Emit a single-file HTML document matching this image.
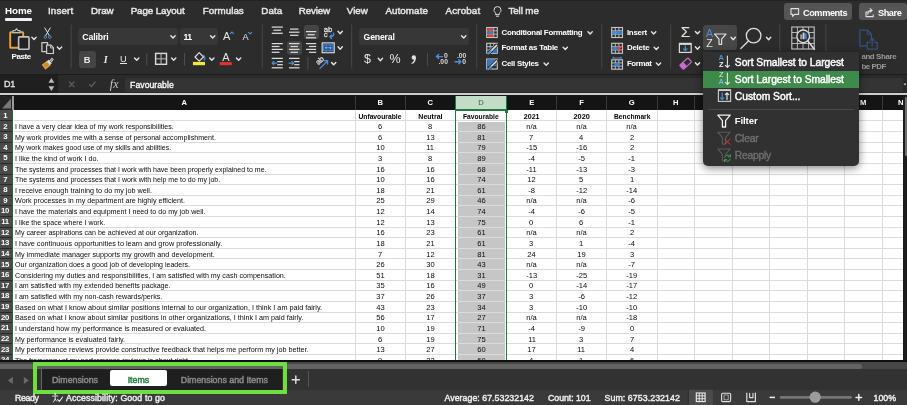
<!DOCTYPE html>
<html><head><meta charset="utf-8"><title>Excel</title>
<style>
html,body{margin:0;padding:0}
body{width:907px;height:405px;overflow:hidden;position:relative;background:#2c2c2c;font-family:"Liberation Sans",sans-serif}
#app{position:absolute;left:0;top:0;width:907px;height:405px;overflow:hidden;will-change:transform;transform:translateZ(0)}
.t{position:absolute;white-space:nowrap;display:block}
.r{position:absolute;box-sizing:content-box}
.clip{position:absolute;overflow:hidden}
svg{position:absolute;left:0;top:0}
</style></head><body><div id="app">
<div class="r" style="left:0.00px;top:0.00px;width:907.00px;height:74.00px;background:#2c2c2c;"></div>
<div class="r" style="left:0.00px;top:74.00px;width:907.00px;height:1.00px;background:#1c1c1c;"></div>
<div class="r" style="left:0.00px;top:0.00px;width:907.00px;height:1.00px;background:#232323;"></div>
<div class="r" style="left:0.00px;top:75.00px;width:907.00px;height:18.00px;background:#2a2a2a;"></div>
<div class="r" style="left:0.00px;top:75.00px;width:57.50px;height:18.00px;background:#1f1f1f;"></div>
<div class="r" style="left:124.50px;top:78.00px;width:778.00px;height:13.50px;background:#343434;border-radius:2px;"></div>
<div class="r" style="left:0.00px;top:93.00px;width:907.00px;height:3.00px;background:#161616;"></div>
<div class="r" style="left:0.00px;top:93.30px;width:907.00px;height:2.00px;background:#cdcdcd;"></div>
<span class="t" style="letter-spacing:-0.057px;left:5.00px;top:5.00px;font-size:9.80px;line-height:12px;color:#fff;font-weight:bold;">Home</span>
<span class="t" style="letter-spacing:0.148px;left:48.00px;top:5.00px;font-size:9.80px;line-height:12px;color:#e6e6e6;-webkit-text-stroke:0.45px #e6e6e6;">Insert</span>
<span class="t" style="letter-spacing:-0.092px;left:91.00px;top:5.00px;font-size:9.80px;line-height:12px;color:#e6e6e6;-webkit-text-stroke:0.45px #e6e6e6;">Draw</span>
<span class="t" style="letter-spacing:-0.103px;left:130.70px;top:5.00px;font-size:9.80px;line-height:12px;color:#e6e6e6;-webkit-text-stroke:0.45px #e6e6e6;">Page Layout</span>
<span class="t" style="letter-spacing:0.020px;left:202.80px;top:5.00px;font-size:9.80px;line-height:12px;color:#e6e6e6;-webkit-text-stroke:0.45px #e6e6e6;">Formulas</span>
<span class="t" style="letter-spacing:0.050px;left:261.30px;top:5.00px;font-size:9.80px;line-height:12px;color:#e6e6e6;-webkit-text-stroke:0.45px #e6e6e6;">Data</span>
<span class="t" style="letter-spacing:-0.189px;left:298.80px;top:5.00px;font-size:9.80px;line-height:12px;color:#e6e6e6;-webkit-text-stroke:0.45px #e6e6e6;">Review</span>
<span class="t" style="letter-spacing:0.009px;left:346.80px;top:5.00px;font-size:9.80px;line-height:12px;color:#e6e6e6;-webkit-text-stroke:0.45px #e6e6e6;">View</span>
<span class="t" style="letter-spacing:0.082px;left:385.40px;top:5.00px;font-size:9.80px;line-height:12px;color:#e6e6e6;-webkit-text-stroke:0.45px #e6e6e6;">Automate</span>
<span class="t" style="letter-spacing:0.132px;left:445.60px;top:5.00px;font-size:9.80px;line-height:12px;color:#e6e6e6;-webkit-text-stroke:0.45px #e6e6e6;">Acrobat</span>
<span class="t" style="letter-spacing:-0.092px;left:508.40px;top:5.00px;font-size:9.80px;line-height:12px;color:#e6e6e6;-webkit-text-stroke:0.45px #e6e6e6;">Tell me</span>
<div class="r" style="left:5.00px;top:18.40px;width:27.00px;height:2.20px;background:#f0f0f0;border-radius:1.1px;"></div>
<div class="r" style="left:784.20px;top:3.30px;width:68.00px;height:17.20px;background:#555555;border-radius:3px;"></div>
<div class="r" style="left:859.20px;top:3.30px;width:48.00px;height:17.20px;background:#555555;border-radius:3px;"></div>
<span class="t" style="letter-spacing:-0.393px;left:802.90px;top:6.50px;font-size:9.20px;line-height:12px;color:#fff;font-weight:bold;">Comments</span>
<span class="t" style="letter-spacing:-0.434px;left:878.00px;top:6.50px;font-size:9.20px;line-height:12px;color:#fff;font-weight:bold;">Share</span>
<div class="r" style="left:78.00px;top:28.20px;width:100.40px;height:17.30px;background:#373737;border-radius:3px;"></div>
<div class="r" style="left:180.00px;top:28.20px;width:38.00px;height:17.30px;background:#373737;border-radius:3px;"></div>
<div class="r" style="left:359.30px;top:28.40px;width:109.70px;height:16.60px;background:#373737;border-radius:3px;"></div>
<div class="r" style="left:78.60px;top:51.00px;width:17.10px;height:16.70px;background:#454545;border-radius:3px;"></div>
<div class="r" style="left:303.50px;top:25.00px;width:15.50px;height:14.30px;background:#454545;border-radius:3px;"></div>
<div class="r" style="left:286.50px;top:41.10px;width:15.50px;height:13.60px;background:#454545;border-radius:3px;"></div>
<div class="r" style="left:703.00px;top:25.20px;width:34.20px;height:24.80px;background:#474747;border-radius:3px;"></div>
<span class="t" style="letter-spacing:-0.125px;left:82.30px;top:30.60px;font-size:8.70px;line-height:12px;color:#fff;font-weight:bold;">Calibri</span>
<span class="t" style="letter-spacing:-0.649px;left:183.60px;top:30.60px;font-size:8.70px;line-height:12px;color:#fff;font-weight:bold;">11</span>
<span class="t" style="letter-spacing:-0.186px;left:363.60px;top:30.70px;font-size:8.70px;line-height:12px;color:#fff;font-weight:bold;">General</span>
<span class="t" style="letter-spacing:-0.463px;left:11.60px;top:50.90px;font-size:8.10px;line-height:12px;color:#fff;font-weight:bold;">Paste</span>
<span class="t" style="left:83.84px;top:53.60px;font-size:9.30px;line-height:12px;color:#e8e8e8;font-weight:bold;">B</span>
<span class="t" style="left:103.81px;top:53.60px;font-size:10.00px;line-height:12px;color:#e8e8e8;font-weight:bold;font-family:'Liberation Serif',serif;font-style:italic;">I</span>
<span class="t" style="left:119.94px;top:53.20px;font-size:9.30px;line-height:12px;color:#e8e8e8;">U</span>
<div class="r" style="left:119.80px;top:63.20px;width:7.00px;height:0.90px;background:#e8e8e8;"></div>
<span class="t" style="left:364.02px;top:53.20px;font-size:12.50px;line-height:12px;color:#e8e8e8;">$</span>
<span class="t" style="left:389.44px;top:53.20px;font-size:12.50px;line-height:12px;color:#e8e8e8;">%</span>
<span class="t" style="letter-spacing:-0.268px;left:501.50px;top:26.70px;font-size:7.90px;line-height:12px;color:#fff;font-weight:bold;">Conditional Formatting</span>
<span class="t" style="letter-spacing:-0.227px;left:501.50px;top:42.20px;font-size:7.90px;line-height:12px;color:#fff;font-weight:bold;">Format as Table</span>
<span class="t" style="letter-spacing:-0.242px;left:501.50px;top:57.90px;font-size:7.90px;line-height:12px;color:#fff;font-weight:bold;">Cell Styles</span>
<span class="t" style="letter-spacing:-0.236px;left:626.90px;top:26.70px;font-size:7.90px;line-height:12px;color:#fff;font-weight:bold;">Insert</span>
<span class="t" style="letter-spacing:-0.202px;left:626.90px;top:42.20px;font-size:7.90px;line-height:12px;color:#fff;font-weight:bold;">Delete</span>
<span class="t" style="letter-spacing:-0.346px;left:626.90px;top:57.90px;font-size:7.90px;line-height:12px;color:#fff;font-weight:bold;">Format</span>
<span class="t" style="letter-spacing:-0.377px;left:861.40px;top:51.00px;font-size:7.90px;line-height:12px;color:#9a9a9a;font-weight:bold;">and Share</span>
<span class="t" style="letter-spacing:-0.436px;left:861.40px;top:61.20px;font-size:7.90px;line-height:12px;color:#9a9a9a;font-weight:bold;">be PDF</span>
<span class="t" style="left:222.93px;top:30.40px;font-size:11.00px;line-height:12px;color:#e4e4e4;">A</span>
<span class="t" style="left:242.53px;top:31.20px;font-size:9.20px;line-height:12px;color:#e4e4e4;">A</span>
<span class="t" style="left:222.13px;top:50.60px;font-size:11.00px;line-height:12px;color:#e4e4e4;">A</span>
<span class="t" style="left:680.81px;top:26.30px;font-size:15.50px;line-height:12px;color:#e4e4e4;">Σ</span>
<span class="t" style="left:323.86px;top:24.30px;font-size:7.80px;line-height:12px;color:#dcdcdc;letter-spacing:-0.3px;-webkit-text-stroke:0.3px #dcdcdc;">ab</span>
<span class="t" style="left:323.85px;top:29.30px;font-size:7.80px;line-height:12px;color:#dcdcdc;-webkit-text-stroke:0.3px #dcdcdc;">c</span>
<span class="t" style="left:316.06px;top:55.40px;font-size:7.80px;line-height:12px;color:#dcdcdc;letter-spacing:-0.3px;-webkit-text-stroke:0.3px #dcdcdc;transform:rotate(-45deg);">ab</span>
<span class="t" style="left:706.06px;top:27.30px;font-size:10.60px;line-height:12px;color:#4a90d9;">A</span>
<span class="t" style="left:706.36px;top:37.40px;font-size:10.60px;line-height:12px;color:#e4e4e4;">Z</span>
<span class="t" style="left:443.91px;top:49.90px;font-size:6.80px;line-height:12px;color:#d8d8d8;font-weight:bold;">0</span>
<span class="t" style="letter-spacing:0.049px;left:438.40px;top:56.00px;font-size:6.80px;line-height:12px;color:#d8d8d8;font-weight:bold;">.00</span>
<span class="t" style="letter-spacing:-0.084px;left:457.00px;top:49.90px;font-size:6.80px;line-height:12px;color:#d8d8d8;font-weight:bold;">.00</span>
<span class="t" style="left:462.31px;top:56.00px;font-size:6.80px;line-height:12px;color:#d8d8d8;font-weight:bold;">0</span>
<span class="t" style="letter-spacing:-0.403px;left:4.10px;top:78.30px;font-size:9.00px;line-height:12px;color:#e6e6e6;-webkit-text-stroke:0.3px #e6e6e6;">D1</span>
<span class="t" style="letter-spacing:0.017px;left:130.10px;top:78.50px;font-size:8.70px;line-height:12px;color:#fff;-webkit-text-stroke:0.3px #fff;">Favourable</span>
<span class="t" style="left:109.83px;top:78.30px;font-size:12.00px;line-height:12px;color:#c8c8c8;font-family:'Liberation Serif',serif;font-style:italic;">fx</span>
<div class="r" style="left:0.00px;top:96.00px;width:907.00px;height:265.80px;background:#111;"></div>
<div class="r" style="left:13.40px;top:110.30px;width:889.90px;height:250.00px;background:#fff;"></div>
<div class="r" style="left:457.70px;top:121.82px;width:47.60px;height:238.48px;background:#c6c6c6;"></div>
<div class="r" style="left:13.50px;top:120.42px;width:889.50px;height:1.00px;background:#dcdcdc;"></div>
<div class="r" style="left:13.50px;top:131.04px;width:889.50px;height:1.00px;background:#dcdcdc;"></div>
<div class="r" style="left:13.50px;top:141.66px;width:889.50px;height:1.00px;background:#dcdcdc;"></div>
<div class="r" style="left:13.50px;top:152.28px;width:889.50px;height:1.00px;background:#dcdcdc;"></div>
<div class="r" style="left:13.50px;top:162.90px;width:889.50px;height:1.00px;background:#dcdcdc;"></div>
<div class="r" style="left:13.50px;top:173.52px;width:889.50px;height:1.00px;background:#dcdcdc;"></div>
<div class="r" style="left:13.50px;top:184.14px;width:889.50px;height:1.00px;background:#dcdcdc;"></div>
<div class="r" style="left:13.50px;top:194.76px;width:889.50px;height:1.00px;background:#dcdcdc;"></div>
<div class="r" style="left:13.50px;top:205.38px;width:889.50px;height:1.00px;background:#dcdcdc;"></div>
<div class="r" style="left:13.50px;top:216.00px;width:889.50px;height:1.00px;background:#dcdcdc;"></div>
<div class="r" style="left:13.50px;top:226.62px;width:889.50px;height:1.00px;background:#dcdcdc;"></div>
<div class="r" style="left:13.50px;top:237.24px;width:889.50px;height:1.00px;background:#dcdcdc;"></div>
<div class="r" style="left:13.50px;top:247.86px;width:889.50px;height:1.00px;background:#dcdcdc;"></div>
<div class="r" style="left:13.50px;top:258.48px;width:889.50px;height:1.00px;background:#dcdcdc;"></div>
<div class="r" style="left:13.50px;top:269.10px;width:889.50px;height:1.00px;background:#dcdcdc;"></div>
<div class="r" style="left:13.50px;top:279.72px;width:889.50px;height:1.00px;background:#dcdcdc;"></div>
<div class="r" style="left:13.50px;top:290.34px;width:889.50px;height:1.00px;background:#dcdcdc;"></div>
<div class="r" style="left:13.50px;top:300.96px;width:889.50px;height:1.00px;background:#dcdcdc;"></div>
<div class="r" style="left:13.50px;top:311.58px;width:889.50px;height:1.00px;background:#dcdcdc;"></div>
<div class="r" style="left:13.50px;top:322.20px;width:889.50px;height:1.00px;background:#dcdcdc;"></div>
<div class="r" style="left:13.50px;top:332.82px;width:889.50px;height:1.00px;background:#dcdcdc;"></div>
<div class="r" style="left:13.50px;top:343.44px;width:889.50px;height:1.00px;background:#dcdcdc;"></div>
<div class="r" style="left:13.50px;top:354.06px;width:889.50px;height:1.00px;background:#dcdcdc;"></div>
<div class="r" style="left:354.80px;top:110.30px;width:1.00px;height:250.00px;background:#dcdcdc;"></div>
<div class="r" style="left:404.80px;top:110.30px;width:1.00px;height:250.00px;background:#dcdcdc;"></div>
<div class="r" style="left:454.70px;top:110.30px;width:1.00px;height:250.00px;background:#dcdcdc;"></div>
<div class="r" style="left:506.30px;top:110.30px;width:1.00px;height:250.00px;background:#dcdcdc;"></div>
<div class="r" style="left:556.10px;top:110.30px;width:1.00px;height:250.00px;background:#dcdcdc;"></div>
<div class="r" style="left:606.00px;top:110.30px;width:1.00px;height:250.00px;background:#dcdcdc;"></div>
<div class="r" style="left:656.50px;top:110.30px;width:1.00px;height:250.00px;background:#dcdcdc;"></div>
<div class="r" style="left:694.00px;top:110.30px;width:1.00px;height:250.00px;background:#dcdcdc;"></div>
<div class="r" style="left:731.50px;top:110.30px;width:1.00px;height:250.00px;background:#dcdcdc;"></div>
<div class="r" style="left:769.00px;top:110.30px;width:1.00px;height:250.00px;background:#dcdcdc;"></div>
<div class="r" style="left:806.50px;top:110.30px;width:1.00px;height:250.00px;background:#dcdcdc;"></div>
<div class="r" style="left:844.00px;top:110.30px;width:1.00px;height:250.00px;background:#dcdcdc;"></div>
<div class="r" style="left:881.50px;top:110.30px;width:1.00px;height:250.00px;background:#dcdcdc;"></div>
<div class="r" style="left:13.50px;top:96.20px;width:889.80px;height:14.10px;background:#141414;"></div>
<div class="r" style="left:354.80px;top:96.00px;width:1.00px;height:14.00px;background:#3a3a3a;"></div>
<div class="r" style="left:404.80px;top:96.00px;width:1.00px;height:14.00px;background:#3a3a3a;"></div>
<div class="r" style="left:454.70px;top:96.00px;width:1.00px;height:14.00px;background:#3a3a3a;"></div>
<div class="r" style="left:506.30px;top:96.00px;width:1.00px;height:14.00px;background:#3a3a3a;"></div>
<div class="r" style="left:556.10px;top:96.00px;width:1.00px;height:14.00px;background:#3a3a3a;"></div>
<div class="r" style="left:606.00px;top:96.00px;width:1.00px;height:14.00px;background:#3a3a3a;"></div>
<div class="r" style="left:656.50px;top:96.00px;width:1.00px;height:14.00px;background:#3a3a3a;"></div>
<div class="r" style="left:694.00px;top:96.00px;width:1.00px;height:14.00px;background:#3a3a3a;"></div>
<div class="r" style="left:731.50px;top:96.00px;width:1.00px;height:14.00px;background:#3a3a3a;"></div>
<div class="r" style="left:769.00px;top:96.00px;width:1.00px;height:14.00px;background:#3a3a3a;"></div>
<div class="r" style="left:806.50px;top:96.00px;width:1.00px;height:14.00px;background:#3a3a3a;"></div>
<div class="r" style="left:844.00px;top:96.00px;width:1.00px;height:14.00px;background:#3a3a3a;"></div>
<div class="r" style="left:881.50px;top:96.00px;width:1.00px;height:14.00px;background:#3a3a3a;"></div>
<div class="r" style="left:455.20px;top:96.20px;width:51.60px;height:14.10px;background:#c3dcc8;"></div>
<span class="t" style="left:181.41px;top:97.40px;font-size:7.60px;line-height:12px;color:#fff;font-weight:bold;">A</span>
<span class="t" style="left:377.56px;top:97.40px;font-size:7.60px;line-height:12px;color:#fff;font-weight:bold;">B</span>
<span class="t" style="left:427.51px;top:97.40px;font-size:7.60px;line-height:12px;color:#fff;font-weight:bold;">C</span>
<span class="t" style="left:478.26px;top:97.40px;font-size:7.60px;line-height:12px;color:#2b6b3f;">D</span>
<span class="t" style="left:529.17px;top:97.40px;font-size:7.60px;line-height:12px;color:#fff;font-weight:bold;">E</span>
<span class="t" style="left:579.23px;top:97.40px;font-size:7.60px;line-height:12px;color:#fff;font-weight:bold;">F</span>
<span class="t" style="left:628.79px;top:97.40px;font-size:7.60px;line-height:12px;color:#fff;font-weight:bold;">G</span>
<span class="t" style="left:673.01px;top:97.40px;font-size:7.60px;line-height:12px;color:#fff;font-weight:bold;">H</span>
<span class="t" style="left:712.19px;top:97.40px;font-size:7.60px;line-height:12px;color:#fff;font-weight:bold;">I</span>
<span class="t" style="left:748.64px;top:97.40px;font-size:7.60px;line-height:12px;color:#fff;font-weight:bold;">J</span>
<span class="t" style="left:785.51px;top:97.40px;font-size:7.60px;line-height:12px;color:#fff;font-weight:bold;">K</span>
<span class="t" style="left:823.43px;top:97.40px;font-size:7.60px;line-height:12px;color:#fff;font-weight:bold;">L</span>
<span class="t" style="left:860.08px;top:97.40px;font-size:7.60px;line-height:12px;color:#fff;font-weight:bold;">M</span>
<div class="clip" style="left:880px;top:96px;width:23.4px;height:14px;">
<span class="t" style="left:17.96px;top:1.40px;font-size:7.60px;line-height:12px;color:#fff;font-weight:bold;">N</span>
</div>
<div class="r" style="left:0.00px;top:96.00px;width:12.30px;height:264.30px;background:#4a4a4a;"></div>
<div class="r" style="left:12.40px;top:96.00px;width:1.20px;height:14.30px;background:#9a9a9a;"></div>
<div class="r" style="left:0.00px;top:96.00px;width:12.30px;height:14.20px;background:#232323;"></div>
<span class="t" style="left:3.23px;top:109.91px;font-size:7.80px;line-height:12px;color:#fff;font-weight:bold;letter-spacing:-0.5px;">1</span>
<div class="r" style="left:0.00px;top:120.42px;width:12.20px;height:1.00px;background:#2a2a2a;"></div>
<span class="t" style="left:3.23px;top:120.53px;font-size:7.80px;line-height:12px;color:#fff;font-weight:bold;letter-spacing:-0.5px;">2</span>
<div class="r" style="left:0.00px;top:131.04px;width:12.20px;height:1.00px;background:#2a2a2a;"></div>
<span class="t" style="left:3.23px;top:131.15px;font-size:7.80px;line-height:12px;color:#fff;font-weight:bold;letter-spacing:-0.5px;">3</span>
<div class="r" style="left:0.00px;top:141.66px;width:12.20px;height:1.00px;background:#2a2a2a;"></div>
<span class="t" style="left:3.23px;top:141.77px;font-size:7.80px;line-height:12px;color:#fff;font-weight:bold;letter-spacing:-0.5px;">4</span>
<div class="r" style="left:0.00px;top:152.28px;width:12.20px;height:1.00px;background:#2a2a2a;"></div>
<span class="t" style="left:3.23px;top:152.39px;font-size:7.80px;line-height:12px;color:#fff;font-weight:bold;letter-spacing:-0.5px;">5</span>
<div class="r" style="left:0.00px;top:162.90px;width:12.20px;height:1.00px;background:#2a2a2a;"></div>
<span class="t" style="left:3.23px;top:163.01px;font-size:7.80px;line-height:12px;color:#fff;font-weight:bold;letter-spacing:-0.5px;">6</span>
<div class="r" style="left:0.00px;top:173.52px;width:12.20px;height:1.00px;background:#2a2a2a;"></div>
<span class="t" style="left:3.23px;top:173.63px;font-size:7.80px;line-height:12px;color:#fff;font-weight:bold;letter-spacing:-0.5px;">7</span>
<div class="r" style="left:0.00px;top:184.14px;width:12.20px;height:1.00px;background:#2a2a2a;"></div>
<span class="t" style="left:3.23px;top:184.25px;font-size:7.80px;line-height:12px;color:#fff;font-weight:bold;letter-spacing:-0.5px;">8</span>
<div class="r" style="left:0.00px;top:194.76px;width:12.20px;height:1.00px;background:#2a2a2a;"></div>
<span class="t" style="left:3.23px;top:194.87px;font-size:7.80px;line-height:12px;color:#fff;font-weight:bold;letter-spacing:-0.5px;">9</span>
<div class="r" style="left:0.00px;top:205.38px;width:12.20px;height:1.00px;background:#2a2a2a;"></div>
<span class="t" style="left:1.06px;top:205.49px;font-size:7.80px;line-height:12px;color:#fff;font-weight:bold;letter-spacing:-0.5px;">10</span>
<div class="r" style="left:0.00px;top:216.00px;width:12.20px;height:1.00px;background:#2a2a2a;"></div>
<span class="t" style="left:1.28px;top:216.11px;font-size:7.80px;line-height:12px;color:#fff;font-weight:bold;letter-spacing:-0.5px;">11</span>
<div class="r" style="left:0.00px;top:226.62px;width:12.20px;height:1.00px;background:#2a2a2a;"></div>
<span class="t" style="left:1.06px;top:226.73px;font-size:7.80px;line-height:12px;color:#fff;font-weight:bold;letter-spacing:-0.5px;">12</span>
<div class="r" style="left:0.00px;top:237.24px;width:12.20px;height:1.00px;background:#2a2a2a;"></div>
<span class="t" style="left:1.06px;top:237.35px;font-size:7.80px;line-height:12px;color:#fff;font-weight:bold;letter-spacing:-0.5px;">13</span>
<div class="r" style="left:0.00px;top:247.86px;width:12.20px;height:1.00px;background:#2a2a2a;"></div>
<span class="t" style="left:1.06px;top:247.97px;font-size:7.80px;line-height:12px;color:#fff;font-weight:bold;letter-spacing:-0.5px;">14</span>
<div class="r" style="left:0.00px;top:258.48px;width:12.20px;height:1.00px;background:#2a2a2a;"></div>
<span class="t" style="left:1.06px;top:258.59px;font-size:7.80px;line-height:12px;color:#fff;font-weight:bold;letter-spacing:-0.5px;">15</span>
<div class="r" style="left:0.00px;top:269.10px;width:12.20px;height:1.00px;background:#2a2a2a;"></div>
<span class="t" style="left:1.06px;top:269.21px;font-size:7.80px;line-height:12px;color:#fff;font-weight:bold;letter-spacing:-0.5px;">16</span>
<div class="r" style="left:0.00px;top:279.72px;width:12.20px;height:1.00px;background:#2a2a2a;"></div>
<span class="t" style="left:1.06px;top:279.83px;font-size:7.80px;line-height:12px;color:#fff;font-weight:bold;letter-spacing:-0.5px;">17</span>
<div class="r" style="left:0.00px;top:290.34px;width:12.20px;height:1.00px;background:#2a2a2a;"></div>
<span class="t" style="left:1.06px;top:290.45px;font-size:7.80px;line-height:12px;color:#fff;font-weight:bold;letter-spacing:-0.5px;">18</span>
<div class="r" style="left:0.00px;top:300.96px;width:12.20px;height:1.00px;background:#2a2a2a;"></div>
<span class="t" style="left:1.06px;top:301.07px;font-size:7.80px;line-height:12px;color:#fff;font-weight:bold;letter-spacing:-0.5px;">19</span>
<div class="r" style="left:0.00px;top:311.58px;width:12.20px;height:1.00px;background:#2a2a2a;"></div>
<span class="t" style="left:1.06px;top:311.69px;font-size:7.80px;line-height:12px;color:#fff;font-weight:bold;letter-spacing:-0.5px;">20</span>
<div class="r" style="left:0.00px;top:322.20px;width:12.20px;height:1.00px;background:#2a2a2a;"></div>
<span class="t" style="left:1.06px;top:322.31px;font-size:7.80px;line-height:12px;color:#fff;font-weight:bold;letter-spacing:-0.5px;">21</span>
<div class="r" style="left:0.00px;top:332.82px;width:12.20px;height:1.00px;background:#2a2a2a;"></div>
<span class="t" style="left:1.06px;top:332.93px;font-size:7.80px;line-height:12px;color:#fff;font-weight:bold;letter-spacing:-0.5px;">22</span>
<div class="r" style="left:0.00px;top:343.44px;width:12.20px;height:1.00px;background:#2a2a2a;"></div>
<span class="t" style="left:1.06px;top:343.55px;font-size:7.80px;line-height:12px;color:#fff;font-weight:bold;letter-spacing:-0.5px;">23</span>
<div class="r" style="left:0.00px;top:354.06px;width:12.20px;height:1.00px;background:#2a2a2a;"></div>
<div class="clip" style="left:0;top:0;width:13px;height:360.30px;">
<span class="t" style="left:1.06px;top:354.17px;font-size:7.80px;line-height:12px;color:#fff;font-weight:bold;letter-spacing:-0.5px;">24</span>
</div>
<div class="r" style="left:0.00px;top:364.68px;width:12.20px;height:1.00px;background:#2a2a2a;"></div>
<div class="r" style="left:12.20px;top:110.30px;width:1.20px;height:250.00px;background:#1e6b35;"></div>
<div class="clip" style="left:0;top:0px;width:907px;height:360.30px;">
<span class="t" style="left:355.38px;top:110.51px;font-size:7.80px;line-height:12px;color:#000;font-weight:bold;transform:scaleX(0.8627);">Unfavourable</span>
<span class="t" style="left:416.81px;top:110.51px;font-size:7.80px;line-height:12px;color:#000;font-weight:bold;transform:scaleX(0.9005);">Neutral</span>
<span class="t" style="left:460.19px;top:110.51px;font-size:7.80px;line-height:12px;color:#000;font-weight:bold;transform:scaleX(0.8579);">Favourable</span>
<span class="t" style="left:523.02px;top:110.51px;font-size:7.80px;line-height:12px;color:#000;font-weight:bold;transform:scaleX(0.9105);">2021</span>
<span class="t" style="left:572.87px;top:110.51px;font-size:7.80px;line-height:12px;color:#000;font-weight:bold;transform:scaleX(0.9393);">2020</span>
<span class="t" style="left:610.51px;top:110.51px;font-size:7.80px;line-height:12px;color:#000;font-weight:bold;transform:scaleX(0.8568);">Benchmark</span>
<span class="t" style="left:14.70px;top:121.13px;font-size:8.00px;line-height:12px;color:#0a0a0a;transform-origin:0 50%;transform:scaleX(0.8786);">I have a very clear idea of my work responsibilities.</span>
<span class="t" style="left:378.08px;top:121.13px;font-size:8.00px;line-height:12px;color:#0a0a0a;transform:scaleX(0.945);">6</span>
<span class="t" style="left:428.03px;top:121.13px;font-size:8.00px;line-height:12px;color:#0a0a0a;transform:scaleX(0.945);">8</span>
<span class="t" style="left:476.55px;top:121.13px;font-size:8.00px;line-height:12px;color:#0a0a0a;transform:scaleX(0.945);">86</span>
<span class="t" style="left:526.14px;top:121.13px;font-size:8.00px;line-height:12px;color:#0a0a0a;transform:scaleX(0.945);">n/a</span>
<span class="t" style="left:575.99px;top:121.13px;font-size:8.00px;line-height:12px;color:#0a0a0a;transform:scaleX(0.945);">n/a</span>
<span class="t" style="left:626.19px;top:121.13px;font-size:8.00px;line-height:12px;color:#0a0a0a;transform:scaleX(0.945);">n/a</span>
<span class="t" style="left:14.70px;top:131.75px;font-size:8.00px;line-height:12px;color:#0a0a0a;transform-origin:0 50%;transform:scaleX(0.8877);">My work provides me with a sense of personal accomplishment.</span>
<span class="t" style="left:378.08px;top:131.75px;font-size:8.00px;line-height:12px;color:#0a0a0a;transform:scaleX(0.945);">6</span>
<span class="t" style="left:425.80px;top:131.75px;font-size:8.00px;line-height:12px;color:#0a0a0a;transform:scaleX(0.945);">13</span>
<span class="t" style="left:476.55px;top:131.75px;font-size:8.00px;line-height:12px;color:#0a0a0a;transform:scaleX(0.945);">81</span>
<span class="t" style="left:529.48px;top:131.75px;font-size:8.00px;line-height:12px;color:#0a0a0a;transform:scaleX(0.945);">7</span>
<span class="t" style="left:579.33px;top:131.75px;font-size:8.00px;line-height:12px;color:#0a0a0a;transform:scaleX(0.945);">4</span>
<span class="t" style="left:629.53px;top:131.75px;font-size:8.00px;line-height:12px;color:#0a0a0a;transform:scaleX(0.945);">2</span>
<span class="t" style="left:14.70px;top:142.37px;font-size:8.00px;line-height:12px;color:#0a0a0a;transform-origin:0 50%;transform:scaleX(0.8739);">My work makes good use of my skills and abilities.</span>
<span class="t" style="left:375.85px;top:142.37px;font-size:8.00px;line-height:12px;color:#0a0a0a;transform:scaleX(0.945);">10</span>
<span class="t" style="left:426.10px;top:142.37px;font-size:8.00px;line-height:12px;color:#0a0a0a;transform:scaleX(0.945);">11</span>
<span class="t" style="left:476.55px;top:142.37px;font-size:8.00px;line-height:12px;color:#0a0a0a;transform:scaleX(0.945);">79</span>
<span class="t" style="left:525.92px;top:142.37px;font-size:8.00px;line-height:12px;color:#0a0a0a;transform:scaleX(0.945);">-15</span>
<span class="t" style="left:575.77px;top:142.37px;font-size:8.00px;line-height:12px;color:#0a0a0a;transform:scaleX(0.945);">-16</span>
<span class="t" style="left:629.53px;top:142.37px;font-size:8.00px;line-height:12px;color:#0a0a0a;transform:scaleX(0.945);">2</span>
<span class="t" style="left:14.70px;top:152.99px;font-size:8.00px;line-height:12px;color:#0a0a0a;transform-origin:0 50%;transform:scaleX(0.9028);">I like the kind of work I do.</span>
<span class="t" style="left:378.08px;top:152.99px;font-size:8.00px;line-height:12px;color:#0a0a0a;transform:scaleX(0.945);">3</span>
<span class="t" style="left:428.03px;top:152.99px;font-size:8.00px;line-height:12px;color:#0a0a0a;transform:scaleX(0.945);">8</span>
<span class="t" style="left:476.55px;top:152.99px;font-size:8.00px;line-height:12px;color:#0a0a0a;transform:scaleX(0.945);">89</span>
<span class="t" style="left:528.14px;top:152.99px;font-size:8.00px;line-height:12px;color:#0a0a0a;transform:scaleX(0.945);">-4</span>
<span class="t" style="left:577.99px;top:152.99px;font-size:8.00px;line-height:12px;color:#0a0a0a;transform:scaleX(0.945);">-5</span>
<span class="t" style="left:628.19px;top:152.99px;font-size:8.00px;line-height:12px;color:#0a0a0a;transform:scaleX(0.945);">-1</span>
<span class="t" style="left:14.70px;top:163.61px;font-size:8.00px;line-height:12px;color:#0a0a0a;transform-origin:0 50%;transform:scaleX(0.8769);">The systems and processes that I work with have been properly explained to me.</span>
<span class="t" style="left:375.85px;top:163.61px;font-size:8.00px;line-height:12px;color:#0a0a0a;transform:scaleX(0.945);">16</span>
<span class="t" style="left:425.80px;top:163.61px;font-size:8.00px;line-height:12px;color:#0a0a0a;transform:scaleX(0.945);">16</span>
<span class="t" style="left:476.55px;top:163.61px;font-size:8.00px;line-height:12px;color:#0a0a0a;transform:scaleX(0.945);">68</span>
<span class="t" style="left:526.22px;top:163.61px;font-size:8.00px;line-height:12px;color:#0a0a0a;transform:scaleX(0.945);">-11</span>
<span class="t" style="left:575.77px;top:163.61px;font-size:8.00px;line-height:12px;color:#0a0a0a;transform:scaleX(0.945);">-13</span>
<span class="t" style="left:628.19px;top:163.61px;font-size:8.00px;line-height:12px;color:#0a0a0a;transform:scaleX(0.945);">-3</span>
<span class="t" style="left:14.70px;top:174.23px;font-size:8.00px;line-height:12px;color:#0a0a0a;transform-origin:0 50%;transform:scaleX(0.8774);">The systems and processes that I work with help me to do my job.</span>
<span class="t" style="left:375.85px;top:174.23px;font-size:8.00px;line-height:12px;color:#0a0a0a;transform:scaleX(0.945);">10</span>
<span class="t" style="left:425.80px;top:174.23px;font-size:8.00px;line-height:12px;color:#0a0a0a;transform:scaleX(0.945);">16</span>
<span class="t" style="left:476.55px;top:174.23px;font-size:8.00px;line-height:12px;color:#0a0a0a;transform:scaleX(0.945);">74</span>
<span class="t" style="left:527.25px;top:174.23px;font-size:8.00px;line-height:12px;color:#0a0a0a;transform:scaleX(0.945);">12</span>
<span class="t" style="left:579.33px;top:174.23px;font-size:8.00px;line-height:12px;color:#0a0a0a;transform:scaleX(0.945);">5</span>
<span class="t" style="left:629.53px;top:174.23px;font-size:8.00px;line-height:12px;color:#0a0a0a;transform:scaleX(0.945);">1</span>
<span class="t" style="left:14.70px;top:184.85px;font-size:8.00px;line-height:12px;color:#0a0a0a;transform-origin:0 50%;transform:scaleX(0.9028);">I receive enough training to do my job well.</span>
<span class="t" style="left:375.85px;top:184.85px;font-size:8.00px;line-height:12px;color:#0a0a0a;transform:scaleX(0.945);">18</span>
<span class="t" style="left:425.80px;top:184.85px;font-size:8.00px;line-height:12px;color:#0a0a0a;transform:scaleX(0.945);">21</span>
<span class="t" style="left:476.55px;top:184.85px;font-size:8.00px;line-height:12px;color:#0a0a0a;transform:scaleX(0.945);">61</span>
<span class="t" style="left:528.14px;top:184.85px;font-size:8.00px;line-height:12px;color:#0a0a0a;transform:scaleX(0.945);">-8</span>
<span class="t" style="left:575.77px;top:184.85px;font-size:8.00px;line-height:12px;color:#0a0a0a;transform:scaleX(0.945);">-12</span>
<span class="t" style="left:625.97px;top:184.85px;font-size:8.00px;line-height:12px;color:#0a0a0a;transform:scaleX(0.945);">-14</span>
<span class="t" style="left:14.70px;top:195.47px;font-size:8.00px;line-height:12px;color:#0a0a0a;transform-origin:0 50%;transform:scaleX(0.8947);">Work processes in my department are highly efficient.</span>
<span class="t" style="left:375.85px;top:195.47px;font-size:8.00px;line-height:12px;color:#0a0a0a;transform:scaleX(0.945);">25</span>
<span class="t" style="left:425.80px;top:195.47px;font-size:8.00px;line-height:12px;color:#0a0a0a;transform:scaleX(0.945);">29</span>
<span class="t" style="left:476.55px;top:195.47px;font-size:8.00px;line-height:12px;color:#0a0a0a;transform:scaleX(0.945);">46</span>
<span class="t" style="left:526.14px;top:195.47px;font-size:8.00px;line-height:12px;color:#0a0a0a;transform:scaleX(0.945);">n/a</span>
<span class="t" style="left:575.99px;top:195.47px;font-size:8.00px;line-height:12px;color:#0a0a0a;transform:scaleX(0.945);">n/a</span>
<span class="t" style="left:628.19px;top:195.47px;font-size:8.00px;line-height:12px;color:#0a0a0a;transform:scaleX(0.945);">-6</span>
<span class="t" style="left:14.70px;top:206.09px;font-size:8.00px;line-height:12px;color:#0a0a0a;transform-origin:0 50%;transform:scaleX(0.8920);">I have the materials and equipment I need to do my job well.</span>
<span class="t" style="left:375.85px;top:206.09px;font-size:8.00px;line-height:12px;color:#0a0a0a;transform:scaleX(0.945);">12</span>
<span class="t" style="left:425.80px;top:206.09px;font-size:8.00px;line-height:12px;color:#0a0a0a;transform:scaleX(0.945);">14</span>
<span class="t" style="left:476.55px;top:206.09px;font-size:8.00px;line-height:12px;color:#0a0a0a;transform:scaleX(0.945);">74</span>
<span class="t" style="left:528.14px;top:206.09px;font-size:8.00px;line-height:12px;color:#0a0a0a;transform:scaleX(0.945);">-4</span>
<span class="t" style="left:577.99px;top:206.09px;font-size:8.00px;line-height:12px;color:#0a0a0a;transform:scaleX(0.945);">-6</span>
<span class="t" style="left:628.19px;top:206.09px;font-size:8.00px;line-height:12px;color:#0a0a0a;transform:scaleX(0.945);">-5</span>
<span class="t" style="left:14.70px;top:216.71px;font-size:8.00px;line-height:12px;color:#0a0a0a;transform-origin:0 50%;transform:scaleX(0.8734);">I like the space where I work.</span>
<span class="t" style="left:375.85px;top:216.71px;font-size:8.00px;line-height:12px;color:#0a0a0a;transform:scaleX(0.945);">12</span>
<span class="t" style="left:425.80px;top:216.71px;font-size:8.00px;line-height:12px;color:#0a0a0a;transform:scaleX(0.945);">13</span>
<span class="t" style="left:476.55px;top:216.71px;font-size:8.00px;line-height:12px;color:#0a0a0a;transform:scaleX(0.945);">75</span>
<span class="t" style="left:529.48px;top:216.71px;font-size:8.00px;line-height:12px;color:#0a0a0a;transform:scaleX(0.945);">0</span>
<span class="t" style="left:579.33px;top:216.71px;font-size:8.00px;line-height:12px;color:#0a0a0a;transform:scaleX(0.945);">6</span>
<span class="t" style="left:628.19px;top:216.71px;font-size:8.00px;line-height:12px;color:#0a0a0a;transform:scaleX(0.945);">-1</span>
<span class="t" style="left:14.70px;top:227.33px;font-size:8.00px;line-height:12px;color:#0a0a0a;transform-origin:0 50%;transform:scaleX(0.8836);">My career aspirations can be achieved at our organization.</span>
<span class="t" style="left:375.85px;top:227.33px;font-size:8.00px;line-height:12px;color:#0a0a0a;transform:scaleX(0.945);">16</span>
<span class="t" style="left:425.80px;top:227.33px;font-size:8.00px;line-height:12px;color:#0a0a0a;transform:scaleX(0.945);">23</span>
<span class="t" style="left:476.55px;top:227.33px;font-size:8.00px;line-height:12px;color:#0a0a0a;transform:scaleX(0.945);">61</span>
<span class="t" style="left:526.14px;top:227.33px;font-size:8.00px;line-height:12px;color:#0a0a0a;transform:scaleX(0.945);">n/a</span>
<span class="t" style="left:575.99px;top:227.33px;font-size:8.00px;line-height:12px;color:#0a0a0a;transform:scaleX(0.945);">n/a</span>
<span class="t" style="left:629.53px;top:227.33px;font-size:8.00px;line-height:12px;color:#0a0a0a;transform:scaleX(0.945);">2</span>
<span class="t" style="left:14.70px;top:237.95px;font-size:8.00px;line-height:12px;color:#0a0a0a;transform-origin:0 50%;transform:scaleX(0.9106);">I have continuous opportunities to learn and grow professionally.</span>
<span class="t" style="left:375.85px;top:237.95px;font-size:8.00px;line-height:12px;color:#0a0a0a;transform:scaleX(0.945);">18</span>
<span class="t" style="left:425.80px;top:237.95px;font-size:8.00px;line-height:12px;color:#0a0a0a;transform:scaleX(0.945);">21</span>
<span class="t" style="left:476.55px;top:237.95px;font-size:8.00px;line-height:12px;color:#0a0a0a;transform:scaleX(0.945);">61</span>
<span class="t" style="left:529.48px;top:237.95px;font-size:8.00px;line-height:12px;color:#0a0a0a;transform:scaleX(0.945);">3</span>
<span class="t" style="left:579.33px;top:237.95px;font-size:8.00px;line-height:12px;color:#0a0a0a;transform:scaleX(0.945);">1</span>
<span class="t" style="left:628.19px;top:237.95px;font-size:8.00px;line-height:12px;color:#0a0a0a;transform:scaleX(0.945);">-4</span>
<span class="t" style="left:14.70px;top:248.57px;font-size:8.00px;line-height:12px;color:#0a0a0a;transform-origin:0 50%;transform:scaleX(0.9018);">My immediate manager supports my growth and development.</span>
<span class="t" style="left:378.08px;top:248.57px;font-size:8.00px;line-height:12px;color:#0a0a0a;transform:scaleX(0.945);">7</span>
<span class="t" style="left:425.80px;top:248.57px;font-size:8.00px;line-height:12px;color:#0a0a0a;transform:scaleX(0.945);">12</span>
<span class="t" style="left:476.55px;top:248.57px;font-size:8.00px;line-height:12px;color:#0a0a0a;transform:scaleX(0.945);">81</span>
<span class="t" style="left:527.25px;top:248.57px;font-size:8.00px;line-height:12px;color:#0a0a0a;transform:scaleX(0.945);">24</span>
<span class="t" style="left:577.10px;top:248.57px;font-size:8.00px;line-height:12px;color:#0a0a0a;transform:scaleX(0.945);">19</span>
<span class="t" style="left:629.53px;top:248.57px;font-size:8.00px;line-height:12px;color:#0a0a0a;transform:scaleX(0.945);">3</span>
<span class="t" style="left:14.70px;top:259.19px;font-size:8.00px;line-height:12px;color:#0a0a0a;transform-origin:0 50%;transform:scaleX(0.8802);">Our organization does a good job of developing leaders.</span>
<span class="t" style="left:375.85px;top:259.19px;font-size:8.00px;line-height:12px;color:#0a0a0a;transform:scaleX(0.945);">26</span>
<span class="t" style="left:425.80px;top:259.19px;font-size:8.00px;line-height:12px;color:#0a0a0a;transform:scaleX(0.945);">30</span>
<span class="t" style="left:476.55px;top:259.19px;font-size:8.00px;line-height:12px;color:#0a0a0a;transform:scaleX(0.945);">43</span>
<span class="t" style="left:526.14px;top:259.19px;font-size:8.00px;line-height:12px;color:#0a0a0a;transform:scaleX(0.945);">n/a</span>
<span class="t" style="left:575.99px;top:259.19px;font-size:8.00px;line-height:12px;color:#0a0a0a;transform:scaleX(0.945);">n/a</span>
<span class="t" style="left:628.19px;top:259.19px;font-size:8.00px;line-height:12px;color:#0a0a0a;transform:scaleX(0.945);">-7</span>
<span class="t" style="left:14.70px;top:269.81px;font-size:8.00px;line-height:12px;color:#0a0a0a;transform-origin:0 50%;transform:scaleX(0.8917);">Considering my duties and responsibilities, I am satisfied with my cash compensation.</span>
<span class="t" style="left:375.85px;top:269.81px;font-size:8.00px;line-height:12px;color:#0a0a0a;transform:scaleX(0.945);">51</span>
<span class="t" style="left:425.80px;top:269.81px;font-size:8.00px;line-height:12px;color:#0a0a0a;transform:scaleX(0.945);">18</span>
<span class="t" style="left:476.55px;top:269.81px;font-size:8.00px;line-height:12px;color:#0a0a0a;transform:scaleX(0.945);">31</span>
<span class="t" style="left:525.92px;top:269.81px;font-size:8.00px;line-height:12px;color:#0a0a0a;transform:scaleX(0.945);">-13</span>
<span class="t" style="left:575.77px;top:269.81px;font-size:8.00px;line-height:12px;color:#0a0a0a;transform:scaleX(0.945);">-25</span>
<span class="t" style="left:625.97px;top:269.81px;font-size:8.00px;line-height:12px;color:#0a0a0a;transform:scaleX(0.945);">-19</span>
<span class="t" style="left:14.70px;top:280.43px;font-size:8.00px;line-height:12px;color:#0a0a0a;transform-origin:0 50%;transform:scaleX(0.8802);">I am satisfied with my extended benefits package.</span>
<span class="t" style="left:375.85px;top:280.43px;font-size:8.00px;line-height:12px;color:#0a0a0a;transform:scaleX(0.945);">35</span>
<span class="t" style="left:425.80px;top:280.43px;font-size:8.00px;line-height:12px;color:#0a0a0a;transform:scaleX(0.945);">16</span>
<span class="t" style="left:476.55px;top:280.43px;font-size:8.00px;line-height:12px;color:#0a0a0a;transform:scaleX(0.945);">49</span>
<span class="t" style="left:529.48px;top:280.43px;font-size:8.00px;line-height:12px;color:#0a0a0a;transform:scaleX(0.945);">0</span>
<span class="t" style="left:575.77px;top:280.43px;font-size:8.00px;line-height:12px;color:#0a0a0a;transform:scaleX(0.945);">-14</span>
<span class="t" style="left:625.97px;top:280.43px;font-size:8.00px;line-height:12px;color:#0a0a0a;transform:scaleX(0.945);">-17</span>
<span class="t" style="left:14.70px;top:291.05px;font-size:8.00px;line-height:12px;color:#0a0a0a;transform-origin:0 50%;transform:scaleX(0.8852);">I am satisfied with my non-cash rewards/perks.</span>
<span class="t" style="left:375.85px;top:291.05px;font-size:8.00px;line-height:12px;color:#0a0a0a;transform:scaleX(0.945);">37</span>
<span class="t" style="left:425.80px;top:291.05px;font-size:8.00px;line-height:12px;color:#0a0a0a;transform:scaleX(0.945);">26</span>
<span class="t" style="left:476.55px;top:291.05px;font-size:8.00px;line-height:12px;color:#0a0a0a;transform:scaleX(0.945);">37</span>
<span class="t" style="left:529.48px;top:291.05px;font-size:8.00px;line-height:12px;color:#0a0a0a;transform:scaleX(0.945);">3</span>
<span class="t" style="left:577.99px;top:291.05px;font-size:8.00px;line-height:12px;color:#0a0a0a;transform:scaleX(0.945);">-6</span>
<span class="t" style="left:625.97px;top:291.05px;font-size:8.00px;line-height:12px;color:#0a0a0a;transform:scaleX(0.945);">-12</span>
<span class="t" style="left:14.70px;top:301.67px;font-size:8.00px;line-height:12px;color:#0a0a0a;transform-origin:0 50%;transform:scaleX(0.9076);">Based on what I know about similar positions internal to our organization, I think I am paid fairly.</span>
<span class="t" style="left:375.85px;top:301.67px;font-size:8.00px;line-height:12px;color:#0a0a0a;transform:scaleX(0.945);">43</span>
<span class="t" style="left:425.80px;top:301.67px;font-size:8.00px;line-height:12px;color:#0a0a0a;transform:scaleX(0.945);">23</span>
<span class="t" style="left:476.55px;top:301.67px;font-size:8.00px;line-height:12px;color:#0a0a0a;transform:scaleX(0.945);">34</span>
<span class="t" style="left:529.48px;top:301.67px;font-size:8.00px;line-height:12px;color:#0a0a0a;transform:scaleX(0.945);">3</span>
<span class="t" style="left:575.77px;top:301.67px;font-size:8.00px;line-height:12px;color:#0a0a0a;transform:scaleX(0.945);">-10</span>
<span class="t" style="left:625.97px;top:301.67px;font-size:8.00px;line-height:12px;color:#0a0a0a;transform:scaleX(0.945);">-10</span>
<span class="t" style="left:14.70px;top:312.29px;font-size:8.00px;line-height:12px;color:#0a0a0a;transform-origin:0 50%;transform:scaleX(0.9012);">Based on what I know about similar positions in other organizations, I think I am paid fairly.</span>
<span class="t" style="left:375.85px;top:312.29px;font-size:8.00px;line-height:12px;color:#0a0a0a;transform:scaleX(0.945);">56</span>
<span class="t" style="left:425.80px;top:312.29px;font-size:8.00px;line-height:12px;color:#0a0a0a;transform:scaleX(0.945);">17</span>
<span class="t" style="left:476.55px;top:312.29px;font-size:8.00px;line-height:12px;color:#0a0a0a;transform:scaleX(0.945);">27</span>
<span class="t" style="left:526.14px;top:312.29px;font-size:8.00px;line-height:12px;color:#0a0a0a;transform:scaleX(0.945);">n/a</span>
<span class="t" style="left:575.99px;top:312.29px;font-size:8.00px;line-height:12px;color:#0a0a0a;transform:scaleX(0.945);">n/a</span>
<span class="t" style="left:625.97px;top:312.29px;font-size:8.00px;line-height:12px;color:#0a0a0a;transform:scaleX(0.945);">-18</span>
<span class="t" style="left:14.70px;top:322.91px;font-size:8.00px;line-height:12px;color:#0a0a0a;transform-origin:0 50%;transform:scaleX(0.8851);">I understand how my performance is measured or evaluated.</span>
<span class="t" style="left:375.85px;top:322.91px;font-size:8.00px;line-height:12px;color:#0a0a0a;transform:scaleX(0.945);">10</span>
<span class="t" style="left:425.80px;top:322.91px;font-size:8.00px;line-height:12px;color:#0a0a0a;transform:scaleX(0.945);">19</span>
<span class="t" style="left:476.55px;top:322.91px;font-size:8.00px;line-height:12px;color:#0a0a0a;transform:scaleX(0.945);">71</span>
<span class="t" style="left:528.14px;top:322.91px;font-size:8.00px;line-height:12px;color:#0a0a0a;transform:scaleX(0.945);">-4</span>
<span class="t" style="left:577.99px;top:322.91px;font-size:8.00px;line-height:12px;color:#0a0a0a;transform:scaleX(0.945);">-9</span>
<span class="t" style="left:629.53px;top:322.91px;font-size:8.00px;line-height:12px;color:#0a0a0a;transform:scaleX(0.945);">0</span>
<span class="t" style="left:14.70px;top:333.53px;font-size:8.00px;line-height:12px;color:#0a0a0a;transform-origin:0 50%;transform:scaleX(0.8910);">My performance is evaluated fairly.</span>
<span class="t" style="left:378.08px;top:333.53px;font-size:8.00px;line-height:12px;color:#0a0a0a;transform:scaleX(0.945);">6</span>
<span class="t" style="left:425.80px;top:333.53px;font-size:8.00px;line-height:12px;color:#0a0a0a;transform:scaleX(0.945);">19</span>
<span class="t" style="left:476.55px;top:333.53px;font-size:8.00px;line-height:12px;color:#0a0a0a;transform:scaleX(0.945);">75</span>
<span class="t" style="left:527.55px;top:333.53px;font-size:8.00px;line-height:12px;color:#0a0a0a;transform:scaleX(0.945);">11</span>
<span class="t" style="left:579.33px;top:333.53px;font-size:8.00px;line-height:12px;color:#0a0a0a;transform:scaleX(0.945);">3</span>
<span class="t" style="left:629.53px;top:333.53px;font-size:8.00px;line-height:12px;color:#0a0a0a;transform:scaleX(0.945);">7</span>
<span class="t" style="left:14.70px;top:344.15px;font-size:8.00px;line-height:12px;color:#0a0a0a;transform-origin:0 50%;transform:scaleX(0.9017);">My performance reviews provide constructive feedback that helps me perform my job better.</span>
<span class="t" style="left:375.85px;top:344.15px;font-size:8.00px;line-height:12px;color:#0a0a0a;transform:scaleX(0.945);">13</span>
<span class="t" style="left:425.80px;top:344.15px;font-size:8.00px;line-height:12px;color:#0a0a0a;transform:scaleX(0.945);">27</span>
<span class="t" style="left:476.55px;top:344.15px;font-size:8.00px;line-height:12px;color:#0a0a0a;transform:scaleX(0.945);">60</span>
<span class="t" style="left:527.25px;top:344.15px;font-size:8.00px;line-height:12px;color:#0a0a0a;transform:scaleX(0.945);">17</span>
<span class="t" style="left:577.40px;top:344.15px;font-size:8.00px;line-height:12px;color:#0a0a0a;transform:scaleX(0.945);">11</span>
<span class="t" style="left:629.53px;top:344.15px;font-size:8.00px;line-height:12px;color:#0a0a0a;transform:scaleX(0.945);">4</span>
<span class="t" style="left:14.70px;top:354.77px;font-size:8.00px;line-height:12px;color:#0a0a0a;transform-origin:0 50%;transform:scaleX(0.8765);">The frequency of my performance reviews is about right.</span>
<span class="t" style="left:378.08px;top:354.77px;font-size:8.00px;line-height:12px;color:#0a0a0a;transform:scaleX(0.945);">9</span>
<span class="t" style="left:425.80px;top:354.77px;font-size:8.00px;line-height:12px;color:#0a0a0a;transform:scaleX(0.945);">22</span>
<span class="t" style="left:476.55px;top:354.77px;font-size:8.00px;line-height:12px;color:#0a0a0a;transform:scaleX(0.945);">69</span>
<span class="t" style="left:529.48px;top:354.77px;font-size:8.00px;line-height:12px;color:#0a0a0a;transform:scaleX(0.945);">4</span>
<span class="t" style="left:579.33px;top:354.77px;font-size:8.00px;line-height:12px;color:#0a0a0a;transform:scaleX(0.945);">1</span>
<span class="t" style="left:629.53px;top:354.77px;font-size:8.00px;line-height:12px;color:#0a0a0a;transform:scaleX(0.945);">6</span>
</div>
<div class="r" style="left:454.60px;top:96.00px;width:1.30px;height:264.30px;background:#1e7a3c;"></div>
<div class="r" style="left:506.20px;top:96.00px;width:1.30px;height:264.30px;background:#1e7a3c;"></div>
<div class="r" style="left:454.60px;top:109.40px;width:52.50px;height:1.20px;background:#1e7a3c;"></div>
<div class="r" style="left:505.30px;top:110.20px;width:3.00px;height:3.00px;background:#1e7a3c;"></div>
<div class="r" style="left:0.00px;top:360.30px;width:907.00px;height:1.70px;background:#0e0e0e;"></div>
<div class="r" style="left:903.30px;top:96.00px;width:3.70px;height:264.30px;background:#1c1c1c;"></div>
<div class="r" style="left:905.10px;top:97.00px;width:2.00px;height:59.00px;background:#707070;border-radius:1px;"></div>
<div class="r" style="left:0.00px;top:362.00px;width:907.00px;height:7.00px;background:#474747;"></div>
<div class="r" style="left:0.00px;top:363.60px;width:862.00px;height:5.00px;background:#636363;border-radius:0 3px 3px 0;"></div>
<div class="r" style="left:0.00px;top:369.00px;width:907.00px;height:20.50px;background:#323232;"></div>
<div class="r" style="left:0.00px;top:389.50px;width:907.00px;height:15.50px;background:#3a3a3a;"></div>
<div class="r" style="left:41.00px;top:369.00px;width:241.00px;height:20.50px;background:#1f1f1f;"></div>
<div class="r" style="left:40.60px;top:369.00px;width:0.80px;height:20.50px;background:#666;"></div>
<div class="r" style="left:110.00px;top:370.40px;width:56.60px;height:15.80px;background:#fff;border-radius:2px;"></div>
<span class="t" style="letter-spacing:0.003px;left:52.00px;top:373.60px;font-size:8.80px;line-height:12px;color:#8a8a8a;-webkit-text-stroke:0.45px #8c8c8c;">Dimensions</span>
<span class="t" style="letter-spacing:-0.003px;left:127.65px;top:373.60px;font-size:8.80px;line-height:12px;color:#1e7a3c;-webkit-text-stroke:0.45px #1e7a3c;">Items</span>
<span class="t" style="letter-spacing:0.007px;left:180.80px;top:373.60px;font-size:8.80px;line-height:12px;color:#8a8a8a;-webkit-text-stroke:0.45px #8c8c8c;">Dimensions and Items</span>
<div class="r" style="left:308.40px;top:371.00px;width:0.80px;height:16.00px;background:#555;"></div>
<div class="r" style="left:33.4px;top:362.4px;width:245.9px;height:24px;border:4px solid #6ddf3e;"></div>
<span class="t" style="letter-spacing:-0.328px;left:14.90px;top:391.50px;font-size:8.80px;line-height:12px;color:#f0f0f0;-webkit-text-stroke:0.4px #f0f0f0;">Ready</span>
<span class="t" style="letter-spacing:0.106px;left:66.00px;top:391.50px;font-size:8.80px;line-height:12px;color:#f0f0f0;-webkit-text-stroke:0.4px #f0f0f0;">Accessibility: Good to go</span>
<span class="t" style="letter-spacing:0.030px;left:444.50px;top:391.50px;font-size:8.80px;line-height:12px;color:#f0f0f0;-webkit-text-stroke:0.4px #f0f0f0;">Average: 67.53232142</span>
<span class="t" style="letter-spacing:-0.056px;left:548.00px;top:391.50px;font-size:8.80px;line-height:12px;color:#f0f0f0;-webkit-text-stroke:0.4px #f0f0f0;">Count: 101</span>
<span class="t" style="letter-spacing:0.070px;left:604.50px;top:391.50px;font-size:8.80px;line-height:12px;color:#f0f0f0;-webkit-text-stroke:0.4px #f0f0f0;">Sum: 6753.232142</span>
<span class="t" style="letter-spacing:-0.002px;left:873.50px;top:391.50px;font-size:8.80px;line-height:12px;color:#f0f0f0;-webkit-text-stroke:0.4px #f0f0f0;">100%</span>
<div class="r" style="left:703.00px;top:51.50px;width:156.00px;height:114.80px;background:#313131;border-radius:0 0 5px 5px;box-shadow:0 2px 8px rgba(0,0,0,.5);"></div>
<div class="r" style="left:703.00px;top:70.60px;width:156.00px;height:17.00px;background:#3d8a4a;"></div>
<div class="r" style="left:708.00px;top:108.80px;width:146.00px;height:0.80px;background:#4a4a4a;"></div>
<span class="t" style="letter-spacing:-0.034px;left:734.80px;top:57.00px;font-size:10.30px;line-height:12px;color:#fff;-webkit-text-stroke:0.42px #fff;">Sort Smallest to Largest</span>
<span class="t" style="letter-spacing:-0.034px;left:734.80px;top:74.00px;font-size:10.30px;line-height:12px;color:#fff;-webkit-text-stroke:0.42px #fff;">Sort Largest to Smallest</span>
<span class="t" style="letter-spacing:-0.009px;left:734.80px;top:90.90px;font-size:10.30px;line-height:12px;color:#fff;-webkit-text-stroke:0.42px #fff;">Custom Sort...</span>
<span class="t" style="letter-spacing:-0.128px;left:734.80px;top:114.90px;font-size:9.60px;line-height:12px;color:#fff;font-weight:bold;">Filter</span>
<span class="t" style="letter-spacing:-0.183px;left:734.80px;top:133.30px;font-size:10.30px;line-height:12px;color:#6e6e6e;-webkit-text-stroke:0.42px #6e6e6e;">Clear</span>
<span class="t" style="letter-spacing:-0.227px;left:734.80px;top:150.40px;font-size:10.30px;line-height:12px;color:#6e6e6e;-webkit-text-stroke:0.42px #6e6e6e;">Reapply</span>
<span class="t" style="left:718.53px;top:51.90px;font-size:7.40px;line-height:12px;color:#4a90d9;font-weight:bold;">A</span>
<span class="t" style="left:718.94px;top:58.90px;font-size:7.40px;line-height:12px;color:#f0f0f0;font-weight:bold;">Z</span>
<span class="t" style="left:718.94px;top:69.30px;font-size:7.40px;line-height:12px;color:#dff0e2;">Z</span>
<span class="t" style="left:718.53px;top:76.10px;font-size:7.40px;line-height:12px;color:#7db4ea;font-weight:bold;">A</span>
<svg width="907" height="405" viewBox="0 0 907 405"><line x1="71.20" y1="24.50" x2="71.20" y2="68.50" stroke="#474747" stroke-width="1.00" stroke-linecap="butt"/><line x1="262.30" y1="24.50" x2="262.30" y2="68.50" stroke="#474747" stroke-width="1.00" stroke-linecap="butt"/><line x1="351.70" y1="24.50" x2="351.70" y2="68.50" stroke="#474747" stroke-width="1.00" stroke-linecap="butt"/><line x1="476.80" y1="24.50" x2="476.80" y2="68.50" stroke="#474747" stroke-width="1.00" stroke-linecap="butt"/><line x1="601.80" y1="24.50" x2="601.80" y2="68.50" stroke="#474747" stroke-width="1.00" stroke-linecap="butt"/><line x1="670.70" y1="24.50" x2="670.70" y2="68.50" stroke="#474747" stroke-width="1.00" stroke-linecap="butt"/><line x1="779.80" y1="24.50" x2="779.80" y2="51.00" stroke="#474747" stroke-width="1.00" stroke-linecap="butt"/><line x1="825.90" y1="24.50" x2="825.90" y2="51.00" stroke="#474747" stroke-width="1.00" stroke-linecap="butt"/><line x1="146.80" y1="52.90" x2="146.80" y2="65.50" stroke="#505050" stroke-width="1.00" stroke-linecap="butt"/><line x1="184.60" y1="52.90" x2="184.60" y2="65.50" stroke="#505050" stroke-width="1.00" stroke-linecap="butt"/><line x1="307.90" y1="57.20" x2="307.90" y2="69.50" stroke="#505050" stroke-width="1.00" stroke-linecap="butt"/><line x1="427.40" y1="52.80" x2="427.40" y2="65.70" stroke="#505050" stroke-width="1.00" stroke-linecap="butt"/><rect x="10.20" y="32.20" width="13.00" height="15.60" stroke="#e8a33d" fill="#202020" stroke-width="1.90" rx="0.60"/><path d="M12.9 32.6V30.6H15L16.5 28.6L18 30.6H20.1V32.6Z" stroke="#bdbdbd" fill="#2b2b2b" stroke-width="1.10" stroke-linejoin="round" stroke-linecap="round" /><rect x="18.60" y="36.90" width="10.40" height="12.40" stroke="#c4c4c4" fill="#222" stroke-width="1.60" rx="0.80"/><path d="M31.85 37.15L34.00 39.45L36.15 37.15" stroke="#e4e4e4" stroke-width="1.40" fill="none" stroke-linecap="round" stroke-linejoin="round"/><line x1="44.60" y1="27.60" x2="49.60" y2="36.00" stroke="#e4e4e4" stroke-width="1.00" stroke-linecap="butt"/><line x1="50.40" y1="27.60" x2="45.40" y2="36.00" stroke="#e4e4e4" stroke-width="1.00" stroke-linecap="butt"/><circle cx="45.30" cy="37.10" r="1.30" stroke="#4a90d9" fill="none" stroke-width="1.00"/><circle cx="49.80" cy="37.10" r="1.30" stroke="#4a90d9" fill="none" stroke-width="1.00"/><path d="M46.3 51.6H41.9V42.7H47.6V44.5" stroke="#cfcfcf" fill="none" stroke-width="1.20" stroke-linejoin="round" stroke-linecap="round" /><path d="M46.6 45.2H51L53.4 47.6V53.5H46.6Z" stroke="#cfcfcf" fill="#2c2c2c" stroke-width="1.20" stroke-linejoin="round" stroke-linecap="round" /><path d="M50.6 45.4V48H53.2" stroke="#cfcfcf" fill="none" stroke-width="0.90" stroke-linejoin="round" stroke-linecap="round" /><path d="M57.35 46.95L59.50 49.25L61.65 46.95" stroke="#e4e4e4" stroke-width="1.40" fill="none" stroke-linecap="round" stroke-linejoin="round"/><path d="M42.6 64.8L47.2 61.4L50 65L45.6 68.8Z" stroke="#e8a33d" fill="#c98a2f" stroke-width="1.10" stroke-linejoin="round" stroke-linecap="round" /><path d="M47.4 61.2L48.8 60L51.4 63.2L50 64.6Z" stroke="#e6e6e6" fill="#e6e6e6" stroke-width="0.60" stroke-linejoin="round" stroke-linecap="round" /><path d="M49.8 60.8L51.8 58.2L53.2 59.4L51.4 62" stroke="#cfcfcf" fill="#8a8a8a" stroke-width="1.00" stroke-linejoin="round" stroke-linecap="round" /><path d="M170.85 35.65L173.00 37.95L175.15 35.65" stroke="#e4e4e4" stroke-width="1.40" fill="none" stroke-linecap="round" stroke-linejoin="round"/><path d="M210.55 35.65L212.70 37.95L214.85 35.65" stroke="#e4e4e4" stroke-width="1.40" fill="none" stroke-linecap="round" stroke-linejoin="round"/><path d="M134.55 58.05L136.70 60.35L138.85 58.05" stroke="#e4e4e4" stroke-width="1.40" fill="none" stroke-linecap="round" stroke-linejoin="round"/><path d="M171.55 58.05L173.70 60.35L175.85 58.05" stroke="#e4e4e4" stroke-width="1.40" fill="none" stroke-linecap="round" stroke-linejoin="round"/><path d="M209.65 58.05L211.80 60.35L213.95 58.05" stroke="#e4e4e4" stroke-width="1.40" fill="none" stroke-linecap="round" stroke-linejoin="round"/><path d="M236.45 58.05L238.60 60.35L240.75 58.05" stroke="#e4e4e4" stroke-width="1.40" fill="none" stroke-linecap="round" stroke-linejoin="round"/><path d="M461.55 35.65L463.70 37.95L465.85 35.65" stroke="#e4e4e4" stroke-width="1.40" fill="none" stroke-linecap="round" stroke-linejoin="round"/><path d="M378.25 58.35L380.40 60.65L382.55 58.35" stroke="#e4e4e4" stroke-width="1.40" fill="none" stroke-linecap="round" stroke-linejoin="round"/><path d="M338.05 31.35L340.20 33.65L342.35 31.35" stroke="#e4e4e4" stroke-width="1.40" fill="none" stroke-linecap="round" stroke-linejoin="round"/><path d="M338.05 46.85L340.20 49.15L342.35 46.85" stroke="#e4e4e4" stroke-width="1.40" fill="none" stroke-linecap="round" stroke-linejoin="round"/><path d="M331.55 62.55L333.70 64.85L335.85 62.55" stroke="#e4e4e4" stroke-width="1.40" fill="none" stroke-linecap="round" stroke-linejoin="round"/><path d="M587.95 31.75L590.10 34.05L592.25 31.75" stroke="#e4e4e4" stroke-width="1.40" fill="none" stroke-linecap="round" stroke-linejoin="round"/><path d="M563.15 47.25L565.30 49.55L567.45 47.25" stroke="#e4e4e4" stroke-width="1.40" fill="none" stroke-linecap="round" stroke-linejoin="round"/><path d="M544.05 62.95L546.20 65.25L548.35 62.95" stroke="#e4e4e4" stroke-width="1.40" fill="none" stroke-linecap="round" stroke-linejoin="round"/><path d="M651.55 31.75L653.70 34.05L655.85 31.75" stroke="#e4e4e4" stroke-width="1.40" fill="none" stroke-linecap="round" stroke-linejoin="round"/><path d="M654.15 47.25L656.30 49.55L658.45 47.25" stroke="#e4e4e4" stroke-width="1.40" fill="none" stroke-linecap="round" stroke-linejoin="round"/><path d="M656.35 62.95L658.50 65.25L660.65 62.95" stroke="#e4e4e4" stroke-width="1.40" fill="none" stroke-linecap="round" stroke-linejoin="round"/><path d="M695.35 31.45L697.50 33.75L699.65 31.45" stroke="#e4e4e4" stroke-width="1.40" fill="none" stroke-linecap="round" stroke-linejoin="round"/><path d="M695.35 46.85L697.50 49.15L699.65 46.85" stroke="#e4e4e4" stroke-width="1.40" fill="none" stroke-linecap="round" stroke-linejoin="round"/><path d="M695.35 62.65L697.50 64.95L699.65 62.65" stroke="#e4e4e4" stroke-width="1.40" fill="none" stroke-linecap="round" stroke-linejoin="round"/><path d="M731.05 37.35L733.20 39.65L735.35 37.35" stroke="#e4e4e4" stroke-width="1.40" fill="none" stroke-linecap="round" stroke-linejoin="round"/><path d="M766.45 37.35L768.60 39.65L770.75 37.35" stroke="#e4e4e4" stroke-width="1.40" fill="none" stroke-linecap="round" stroke-linejoin="round"/><rect x="155.60" y="53.40" width="10.90" height="10.90" stroke="#dcdcdc" fill="none" stroke-width="1.40" rx="0.00"/><line x1="161.05" y1="53.40" x2="161.05" y2="64.30" stroke="#bdbdbd" stroke-width="1.00" stroke-linecap="butt"/><line x1="155.60" y1="58.85" x2="166.50" y2="58.85" stroke="#bdbdbd" stroke-width="1.00" stroke-linecap="butt"/><path d="M230.3 33.6L231.9 32L233.5 33.6" stroke="#4a90d9" fill="none" stroke-width="1.10" stroke-linejoin="round" stroke-linecap="round" /><path d="M248.5 32.3L250.1 33.9L251.7 32.3" stroke="#4a90d9" fill="none" stroke-width="1.10" stroke-linejoin="round" stroke-linecap="round" /><path d="M199.2 52.6L203.6 57L199.2 61.2L195 57Z" stroke="#e0e0e0" fill="none" stroke-width="1.15" stroke-linejoin="round" stroke-linecap="round" /><path d="M203.2 55.2C205.4 56.6 205.3 58.8 204.2 60.2" stroke="#4a90d9" fill="none" stroke-width="1.20" stroke-linejoin="round" stroke-linecap="round" /><rect x="192.90" y="61.90" width="12.10" height="3.30" stroke="none" fill="#f2e63a" stroke-width="0.00" rx="0.00"/><rect x="219.70" y="62.10" width="12.10" height="3.10" stroke="none" fill="#e3322b" stroke-width="0.00" rx="0.00"/><line x1="271.70" y1="27.10" x2="282.80" y2="27.10" stroke="#dcdcdc" stroke-width="1.25" stroke-linecap="butt"/><line x1="273.37" y1="30.20" x2="281.13" y2="30.20" stroke="#dcdcdc" stroke-width="1.25" stroke-linecap="butt"/><line x1="271.70" y1="33.30" x2="282.80" y2="33.30" stroke="#dcdcdc" stroke-width="1.25" stroke-linecap="butt"/><line x1="290.05" y1="29.10" x2="298.45" y2="29.10" stroke="#dcdcdc" stroke-width="1.25" stroke-linecap="butt"/><line x1="289.00" y1="32.20" x2="299.50" y2="32.20" stroke="#dcdcdc" stroke-width="1.25" stroke-linecap="butt"/><line x1="290.05" y1="35.30" x2="298.45" y2="35.30" stroke="#dcdcdc" stroke-width="1.25" stroke-linecap="butt"/><line x1="306.00" y1="31.60" x2="316.20" y2="31.60" stroke="#dcdcdc" stroke-width="1.25" stroke-linecap="butt"/><line x1="307.53" y1="34.70" x2="314.67" y2="34.70" stroke="#dcdcdc" stroke-width="1.25" stroke-linecap="butt"/><line x1="306.00" y1="37.80" x2="316.20" y2="37.80" stroke="#dcdcdc" stroke-width="1.25" stroke-linecap="butt"/><line x1="271.70" y1="43.60" x2="282.80" y2="43.60" stroke="#dcdcdc" stroke-width="1.25" stroke-linecap="butt"/><line x1="271.70" y1="46.50" x2="279.47" y2="46.50" stroke="#dcdcdc" stroke-width="1.25" stroke-linecap="butt"/><line x1="271.70" y1="49.40" x2="282.80" y2="49.40" stroke="#dcdcdc" stroke-width="1.25" stroke-linecap="butt"/><line x1="271.70" y1="52.30" x2="279.47" y2="52.30" stroke="#dcdcdc" stroke-width="1.25" stroke-linecap="butt"/><line x1="289.00" y1="43.60" x2="299.50" y2="43.60" stroke="#dcdcdc" stroke-width="1.25" stroke-linecap="butt"/><line x1="290.57" y1="46.50" x2="297.93" y2="46.50" stroke="#dcdcdc" stroke-width="1.25" stroke-linecap="butt"/><line x1="289.00" y1="49.40" x2="299.50" y2="49.40" stroke="#dcdcdc" stroke-width="1.25" stroke-linecap="butt"/><line x1="290.57" y1="52.30" x2="297.93" y2="52.30" stroke="#dcdcdc" stroke-width="1.25" stroke-linecap="butt"/><line x1="306.00" y1="43.60" x2="316.20" y2="43.60" stroke="#dcdcdc" stroke-width="1.25" stroke-linecap="butt"/><line x1="309.06" y1="46.50" x2="316.20" y2="46.50" stroke="#dcdcdc" stroke-width="1.25" stroke-linecap="butt"/><line x1="306.00" y1="49.40" x2="316.20" y2="49.40" stroke="#dcdcdc" stroke-width="1.25" stroke-linecap="butt"/><line x1="309.06" y1="52.30" x2="316.20" y2="52.30" stroke="#dcdcdc" stroke-width="1.25" stroke-linecap="butt"/><line x1="271.70" y1="58.40" x2="282.80" y2="58.40" stroke="#dcdcdc" stroke-width="1.25" stroke-linecap="butt"/><line x1="277.25" y1="61.60" x2="282.80" y2="61.60" stroke="#dcdcdc" stroke-width="1.25" stroke-linecap="butt"/><line x1="277.25" y1="64.70" x2="282.80" y2="64.70" stroke="#dcdcdc" stroke-width="1.25" stroke-linecap="butt"/><line x1="271.70" y1="67.80" x2="282.80" y2="67.80" stroke="#dcdcdc" stroke-width="1.25" stroke-linecap="butt"/><path d="M276.8 63.1H272.2M273.9 61.3L272.1 63.1L273.9 64.9" stroke="#4a90d9" fill="none" stroke-width="1.15" stroke-linejoin="round" stroke-linecap="round" /><line x1="289.00" y1="58.40" x2="299.50" y2="58.40" stroke="#dcdcdc" stroke-width="1.25" stroke-linecap="butt"/><line x1="294.25" y1="61.60" x2="299.50" y2="61.60" stroke="#dcdcdc" stroke-width="1.25" stroke-linecap="butt"/><line x1="294.25" y1="64.70" x2="299.50" y2="64.70" stroke="#dcdcdc" stroke-width="1.25" stroke-linecap="butt"/><line x1="289.00" y1="67.80" x2="299.50" y2="67.80" stroke="#dcdcdc" stroke-width="1.25" stroke-linecap="butt"/><path d="M289 63.1H293.6M291.9 61.3L293.7 63.1L291.9 64.9" stroke="#4a90d9" fill="none" stroke-width="1.15" stroke-linejoin="round" stroke-linecap="round" /><path d="M333.4 33.2C334.6 35.2 333 36.9 330 36.7M331.6 34.9L329.7 36.7L331.6 38.5" stroke="#4a90d9" fill="none" stroke-width="1.30" stroke-linejoin="round" stroke-linecap="round" /><rect x="322.20" y="42.90" width="12.00" height="9.80" stroke="#dcdcdc" fill="none" stroke-width="1.20" rx="0.00"/><rect x="323.40" y="44.90" width="9.60" height="5.80" stroke="#3f86d6" fill="#2a4f7d" stroke-width="1.20" rx="0.00"/><line x1="326.20" y1="43.00" x2="326.20" y2="44.60" stroke="#3f86d6" stroke-width="0.90" stroke-linecap="butt"/><line x1="330.20" y1="43.00" x2="330.20" y2="44.60" stroke="#3f86d6" stroke-width="0.90" stroke-linecap="butt"/><line x1="326.20" y1="51.00" x2="326.20" y2="52.60" stroke="#3f86d6" stroke-width="0.90" stroke-linecap="butt"/><line x1="330.20" y1="51.00" x2="330.20" y2="52.60" stroke="#3f86d6" stroke-width="0.90" stroke-linecap="butt"/><path d="M325.2 47.8H331.2M326.4 46.7L325.2 47.8L326.4 48.9M330 46.7L331.2 47.8L330 48.9" stroke="#8fc0f5" fill="none" stroke-width="0.80" stroke-linejoin="round" stroke-linecap="round" /><path d="M320 68.4L327.4 61M324.3 60.7H327.6V64" stroke="#4a90d9" fill="none" stroke-width="1.25" stroke-linejoin="round" stroke-linecap="round" /><path d="M411.6 57.4a2.2 2.2 0 1 1 4.4 0c0 3.4-1.6 5.6-4.2 6.6l-0.5-0.9c1.5-0.7 2.4-1.8 2.6-3.5a2.2 2.2 0 0 1-2.3-2.2Z" stroke="none" fill="#e0e0e0" stroke-width="0.00" stroke-linejoin="round" stroke-linecap="round" /><path d="M442.6 56.6H436.6M438.6 54.6L436.5 56.6L438.6 58.6" stroke="#4a90d9" fill="none" stroke-width="1.40" stroke-linejoin="round" stroke-linecap="round" /><path d="M455 61.8H460.8M458.8 59.8L460.9 61.8L458.8 63.8" stroke="#4a90d9" fill="none" stroke-width="1.40" stroke-linejoin="round" stroke-linecap="round" /><rect x="486.70" y="27.50" width="10.60" height="10.00" stroke="#c8c8c8" fill="none" stroke-width="1.10" rx="0.00"/><line x1="490.23" y1="27.50" x2="490.23" y2="37.50" stroke="#c8c8c8" stroke-width="0.90" stroke-linecap="butt"/><line x1="493.77" y1="27.50" x2="493.77" y2="37.50" stroke="#c8c8c8" stroke-width="0.90" stroke-linecap="butt"/><line x1="486.70" y1="30.83" x2="497.30" y2="30.83" stroke="#c8c8c8" stroke-width="0.90" stroke-linecap="butt"/><line x1="486.70" y1="34.17" x2="497.30" y2="34.17" stroke="#c8c8c8" stroke-width="0.90" stroke-linecap="butt"/><rect x="487.40" y="28.20" width="5.60" height="2.50" stroke="none" fill="#d9453d" stroke-width="0.00" rx="0.00"/><rect x="487.40" y="31.40" width="5.60" height="2.40" stroke="none" fill="#3f7fc9" stroke-width="0.00" rx="0.00"/><rect x="487.40" y="34.50" width="5.60" height="2.40" stroke="none" fill="#d9453d" stroke-width="0.00" rx="0.00"/><rect x="486.70" y="43.30" width="10.60" height="10.00" stroke="#c8c8c8" fill="none" stroke-width="1.10" rx="0.00"/><line x1="490.23" y1="43.30" x2="490.23" y2="53.30" stroke="#c8c8c8" stroke-width="0.90" stroke-linecap="butt"/><line x1="493.77" y1="43.30" x2="493.77" y2="53.30" stroke="#c8c8c8" stroke-width="0.90" stroke-linecap="butt"/><line x1="486.70" y1="46.63" x2="497.30" y2="46.63" stroke="#c8c8c8" stroke-width="0.90" stroke-linecap="butt"/><line x1="486.70" y1="49.97" x2="497.30" y2="49.97" stroke="#c8c8c8" stroke-width="0.90" stroke-linecap="butt"/><rect x="490.40" y="47.00" width="6.40" height="5.80" stroke="none" fill="#3a78c4" stroke-width="0.00" rx="0.00"/><path d="M489 53L496.8 45.2" stroke="#2c2c2c" fill="none" stroke-width="3.20" stroke-linejoin="round" stroke-linecap="round" /><path d="M489.4 52.6L496.6 45.4" stroke="#dcdcdc" fill="none" stroke-width="1.60" stroke-linejoin="round" stroke-linecap="round" /><path d="M488.2 53.6L490.8 51" stroke="#4a90d9" fill="none" stroke-width="1.80" stroke-linejoin="round" stroke-linecap="round" /><rect x="486.70" y="59.00" width="10.60" height="10.00" stroke="#c8c8c8" fill="none" stroke-width="1.10" rx="0.00"/><rect x="487.40" y="59.70" width="9.20" height="6.40" stroke="none" fill="#3a78c4" stroke-width="0.00" rx="0.00"/><path d="M489 68.7L496.8 60.9" stroke="#2c2c2c" fill="none" stroke-width="3.20" stroke-linejoin="round" stroke-linecap="round" /><path d="M489.4 68.3L496.6 61.1" stroke="#dcdcdc" fill="none" stroke-width="1.60" stroke-linejoin="round" stroke-linecap="round" /><path d="M488.2 69.3L490.8 66.7" stroke="#4a90d9" fill="none" stroke-width="1.80" stroke-linejoin="round" stroke-linecap="round" /><rect x="611.70" y="27.50" width="10.80" height="10.00" stroke="#c8c8c8" fill="none" stroke-width="1.10" rx="0.00"/><line x1="615.30" y1="27.50" x2="615.30" y2="37.50" stroke="#c8c8c8" stroke-width="0.90" stroke-linecap="butt"/><line x1="618.90" y1="27.50" x2="618.90" y2="37.50" stroke="#c8c8c8" stroke-width="0.90" stroke-linecap="butt"/><line x1="611.70" y1="30.83" x2="622.50" y2="30.83" stroke="#c8c8c8" stroke-width="0.90" stroke-linecap="butt"/><line x1="611.70" y1="34.17" x2="622.50" y2="34.17" stroke="#c8c8c8" stroke-width="0.90" stroke-linecap="butt"/><rect x="615.50" y="31.00" width="6.80" height="3.20" stroke="none" fill="#3f7fc9" stroke-width="0.00" rx="0.00"/><path d="M617.5 32.6H612.5M614.2 30.9L612.4 32.6L614.2 34.3" stroke="#4a90d9" fill="none" stroke-width="1.20" stroke-linejoin="round" stroke-linecap="round" /><rect x="611.70" y="43.30" width="10.80" height="10.00" stroke="#c8c8c8" fill="none" stroke-width="1.10" rx="0.00"/><line x1="615.30" y1="43.30" x2="615.30" y2="53.30" stroke="#c8c8c8" stroke-width="0.90" stroke-linecap="butt"/><line x1="618.90" y1="43.30" x2="618.90" y2="53.30" stroke="#c8c8c8" stroke-width="0.90" stroke-linecap="butt"/><line x1="611.70" y1="46.63" x2="622.50" y2="46.63" stroke="#c8c8c8" stroke-width="0.90" stroke-linecap="butt"/><line x1="611.70" y1="49.97" x2="622.50" y2="49.97" stroke="#c8c8c8" stroke-width="0.90" stroke-linecap="butt"/><rect x="612.60" y="46.70" width="5.00" height="3.20" stroke="none" fill="#3f7fc9" stroke-width="0.00" rx="0.00"/><path d="M617.6 46L621.8 50.6M621.8 46L617.6 50.6" stroke="#e0453d" fill="none" stroke-width="1.20" stroke-linejoin="round" stroke-linecap="round" /><rect x="611.70" y="59.80" width="10.80" height="9.40" stroke="#c8c8c8" fill="none" stroke-width="1.10" rx="0.00"/><line x1="615.30" y1="59.80" x2="615.30" y2="69.20" stroke="#c8c8c8" stroke-width="0.90" stroke-linecap="butt"/><line x1="618.90" y1="59.80" x2="618.90" y2="69.20" stroke="#c8c8c8" stroke-width="0.90" stroke-linecap="butt"/><line x1="611.70" y1="62.93" x2="622.50" y2="62.93" stroke="#c8c8c8" stroke-width="0.90" stroke-linecap="butt"/><line x1="611.70" y1="66.07" x2="622.50" y2="66.07" stroke="#c8c8c8" stroke-width="0.90" stroke-linecap="butt"/><rect x="614.20" y="62.90" width="5.80" height="3.30" stroke="none" fill="#3f7fc9" stroke-width="0.00" rx="0.00"/><path d="M613.2 58H621M613.2 57V59M621 57V59" stroke="#4a90d9" fill="none" stroke-width="1.00" stroke-linejoin="round" stroke-linecap="round" /><rect x="679.40" y="43.40" width="11.80" height="9.00" stroke="#dcdcdc" fill="none" stroke-width="1.20" rx="0.00"/><line x1="679.40" y1="44.00" x2="691.20" y2="44.00" stroke="#dcdcdc" stroke-width="1.80" stroke-linecap="butt"/><path d="M685.3 45.8V50.6M683.5 48.9L685.3 50.7L687.1 48.9" stroke="#4a90d9" fill="none" stroke-width="1.20" stroke-linejoin="round" stroke-linecap="round" /><g transform="rotate(-42 685.6 63.6)"><rect x="680" y="60.8" width="11.2" height="5.6" rx="1" stroke="#c76bd0" fill="none" stroke-width="1.2"/><rect x="680" y="60.8" width="5" height="5.6" rx="1" fill="#c76bd0"/></g><path d="M714.6 34H726L721.6 39.2V44.3H719V39.2Z" stroke="#dcdcdc" fill="none" stroke-width="1.20" stroke-linejoin="round" stroke-linecap="round" /><circle cx="753.60" cy="35.60" r="7.30" stroke="#dcdcdc" fill="none" stroke-width="1.30"/><line x1="748.40" y1="41.00" x2="740.80" y2="48.50" stroke="#dcdcdc" stroke-width="1.30" stroke-linecap="round"/><rect x="791.80" y="27.00" width="22.40" height="22.00" stroke="#c4c4c4" fill="none" stroke-width="1.10" rx="0.00"/><line x1="797.40" y1="27.00" x2="797.40" y2="49.00" stroke="#c4c4c4" stroke-width="0.90" stroke-linecap="butt"/><line x1="803.00" y1="27.00" x2="803.00" y2="49.00" stroke="#c4c4c4" stroke-width="0.90" stroke-linecap="butt"/><line x1="808.60" y1="27.00" x2="808.60" y2="49.00" stroke="#c4c4c4" stroke-width="0.90" stroke-linecap="butt"/><line x1="791.80" y1="32.50" x2="814.20" y2="32.50" stroke="#c4c4c4" stroke-width="0.90" stroke-linecap="butt"/><line x1="791.80" y1="38.00" x2="814.20" y2="38.00" stroke="#c4c4c4" stroke-width="0.90" stroke-linecap="butt"/><line x1="791.80" y1="43.50" x2="814.20" y2="43.50" stroke="#c4c4c4" stroke-width="0.90" stroke-linecap="butt"/><circle cx="803.20" cy="36.30" r="6.30" stroke="#dcdcdc" fill="#2c2c2c" stroke-width="1.30"/><line x1="807.80" y1="41.00" x2="814.40" y2="49.20" stroke="#dcdcdc" stroke-width="1.50" stroke-linecap="round"/><rect x="800.20" y="34.40" width="2.00" height="4.80" stroke="none" fill="#9a9a9a" stroke-width="0.00" rx="0.00"/><rect x="802.60" y="32.60" width="2.00" height="6.60" stroke="none" fill="#cfcfcf" stroke-width="0.00" rx="0.00"/><rect x="805.00" y="33.40" width="1.80" height="5.80" stroke="none" fill="#2f7fe0" stroke-width="0.00" rx="0.00"/><path d="M866 46H859.9V30.2H867.5L871.3 34V38.5" stroke="#34507c" fill="none" stroke-width="1.30" stroke-linejoin="round" stroke-linecap="round" /><path d="M867.3 30.4V34.2H871.1" stroke="#34507c" fill="none" stroke-width="1.10" stroke-linejoin="round" stroke-linecap="round" /><path d="M870 42.3H867.2V49.2H877.2V42.3H874.4" stroke="#34507c" fill="none" stroke-width="1.30" stroke-linejoin="round" stroke-linecap="round" /><path d="M872.2 46V38.6M870.3 40.4L872.2 38.5L874.1 40.4" stroke="#34507c" fill="none" stroke-width="1.30" stroke-linejoin="round" stroke-linecap="round" /><path d="M791 8.6H798.6V14.4H794.6L792.6 16.4V14.4H791Z" stroke="#e0e0e0" fill="none" stroke-width="1.10" stroke-linejoin="round" stroke-linecap="round" /><path d="M867.8 12H866V16.6H873.2V14.8" stroke="#e0e0e0" fill="none" stroke-width="1.10" stroke-linejoin="round" stroke-linecap="round" /><path d="M867.8 14.2C868 11.6 869.6 10.4 871.6 10.4M870.2 8.6L872.2 10.4L870.2 12.2" stroke="#e0e0e0" fill="none" stroke-width="1.10" stroke-linejoin="round" stroke-linecap="round" /><path d="M495.7 13.2C494.3 12.2 494 10.8 494 10.1A3.5 3.5 0 0 1 501 10.1C501 10.8 500.7 12.2 499.3 13.2V14.6H495.7Z" stroke="#dcdcdc" fill="none" stroke-width="1.00" stroke-linejoin="round" stroke-linecap="round" /><line x1="496.00" y1="16.20" x2="499.00" y2="16.20" stroke="#dcdcdc" stroke-width="1.00" stroke-linecap="butt"/><path d="M48.5 82.8L51.4 78.1L54.3 82.8Z" stroke="none" fill="#bdbdbd" stroke-width="0.00" stroke-linejoin="round" stroke-linecap="round" /><path d="M48.5 86.3L51.4 91L54.3 86.3Z" stroke="none" fill="#bdbdbd" stroke-width="0.00" stroke-linejoin="round" stroke-linecap="round" /><path d="M69.4 82L74 86.6M74 82L69.4 86.6" stroke="#5e5e5e" fill="none" stroke-width="1.30" stroke-linejoin="round" stroke-linecap="round" /><path d="M89.6 84.6L91.4 86.6L95 82" stroke="#5e5e5e" fill="none" stroke-width="1.30" stroke-linejoin="round" stroke-linecap="round" /><path d="M903.4 83.4L905 85.6L906.6 83.4Z" stroke="none" fill="#c8c8c8" stroke-width="0.00" stroke-linejoin="round" stroke-linecap="round" /><path d="M2 108.5H11V98.6Z" stroke="none" fill="#787878" stroke-width="0.00" stroke-linejoin="round" stroke-linecap="round" /><path d="M727.40 56.00V67.40M725.40 65.40L727.40 67.40L729.40 65.40" stroke="#e4e4e4" fill="none" stroke-width="1.10" stroke-linejoin="round" stroke-linecap="round" /><path d="M727.40 73.00V84.40M725.40 82.40L727.40 84.40L729.40 82.40" stroke="#e4e4e4" fill="none" stroke-width="1.10" stroke-linejoin="round" stroke-linecap="round" /><rect x="718.40" y="89.80" width="12.20" height="11.60" stroke="#d0d0d0" fill="none" stroke-width="1.10" rx="0.00"/><line x1="718.40" y1="90.20" x2="730.60" y2="90.20" stroke="#d0d0d0" stroke-width="1.60" stroke-linecap="butt"/><path d="M722.20 93.00V99.60M720.50 97.90L722.20 99.60L723.90 97.90" stroke="#4a90d9" fill="none" stroke-width="1.20" stroke-linejoin="round" stroke-linecap="round" /><path d="M727.00 99.60V93.00M725.30 94.70L727.00 93.00L728.70 94.70" stroke="#e4e4e4" fill="none" stroke-width="1.20" stroke-linejoin="round" stroke-linecap="round" /><path d="M717.80 115.20h12.4l-4.6 5.4v6.4h-3.2v-6.4Z" stroke="#f0f0f0" fill="none" stroke-width="1.30" stroke-linejoin="round" stroke-linecap="round" /><path d="M717.80 132.20h12.4l-4.6 5.4v6.4h-3.2v-6.4Z" stroke="#5a5a5a" fill="none" stroke-width="1.10" stroke-linejoin="round" stroke-linecap="round" /><path d="M724.8 139L730.2 144.4M730.2 139L724.8 144.4" stroke="#c2413b" fill="none" stroke-width="1.00" stroke-linejoin="round" stroke-linecap="round" /><path d="M717.80 149.00h12.4l-4.6 5.4v6.4h-3.2v-6.4Z" stroke="#5a5a5a" fill="none" stroke-width="1.10" stroke-linejoin="round" stroke-linecap="round" /><circle cx="727.40" cy="158.20" r="3.60" stroke="none" fill="#313131" stroke-width="0.00"/><path d="M724.6 157.4A3 3 0 0 1 730 156.4M730.4 154.6V156.8H728.2M730.3 159A3 3 0 0 1 724.9 160M724.5 161.8V159.6H726.7" stroke="#4a9a58" fill="none" stroke-width="1.00" stroke-linejoin="round" stroke-linecap="round" /><path d="M12.8 376.8V384L7.8 380.4Z" stroke="none" fill="#6a6a6a" stroke-width="0.00" stroke-linejoin="round" stroke-linecap="round" /><path d="M23.8 376.8V384L28.8 380.4Z" stroke="none" fill="#6a6a6a" stroke-width="0.00" stroke-linejoin="round" stroke-linecap="round" /><path d="M292.2 379.7H299.4M295.8 376.1V383.3" stroke="#dcdcdc" fill="none" stroke-width="1.50" stroke-linejoin="round" stroke-linecap="round" /><rect x="688.30" y="389.80" width="24.60" height="15.20" stroke="none" fill="#4b4b4b" stroke-width="0.00" rx="0.00"/><line x1="688.30" y1="389.80" x2="688.30" y2="405.00" stroke="#2a2a2a" stroke-width="1.00" stroke-linecap="butt"/><rect x="696.30" y="393.00" width="8.80" height="8.60" stroke="#f0f0f0" fill="none" stroke-width="1.10" rx="0.00"/><line x1="699.23" y1="393.00" x2="699.23" y2="401.60" stroke="#f0f0f0" stroke-width="0.90" stroke-linecap="butt"/><line x1="702.17" y1="393.00" x2="702.17" y2="401.60" stroke="#f0f0f0" stroke-width="0.90" stroke-linecap="butt"/><line x1="696.30" y1="395.87" x2="705.10" y2="395.87" stroke="#f0f0f0" stroke-width="0.90" stroke-linecap="butt"/><line x1="696.30" y1="398.73" x2="705.10" y2="398.73" stroke="#f0f0f0" stroke-width="0.90" stroke-linecap="butt"/><rect x="721.60" y="393.20" width="9.00" height="8.40" stroke="#e0e0e0" fill="none" stroke-width="1.10" rx="1.00"/><rect x="724.00" y="395.00" width="4.20" height="4.80" stroke="#bdbdbd" fill="none" stroke-width="0.80" rx="0.00"/><path d="M746.8 393.2V401.6H755.4V393.2" stroke="#e0e0e0" fill="none" stroke-width="1.20" stroke-linejoin="round" stroke-linecap="round" /><path d="M749.6 393.2V397.6H753V393.2" stroke="#e0e0e0" fill="none" stroke-width="1.10" stroke-linejoin="round" stroke-linecap="round" /><line x1="769.60" y1="397.40" x2="775.00" y2="397.40" stroke="#f0f0f0" stroke-width="1.50" stroke-linecap="butt"/><line x1="781.00" y1="397.40" x2="850.60" y2="397.40" stroke="#767676" stroke-width="2.60" stroke-linecap="round"/><circle cx="815.20" cy="397.20" r="5.60" stroke="none" fill="#9c9c9c" stroke-width="0.00"/><path d="M856 397.4H861.6M858.8 394.6V400.2" stroke="#f0f0f0" fill="none" stroke-width="1.50" stroke-linejoin="round" stroke-linecap="round" /><circle cx="55.20" cy="393.80" r="1.10" stroke="none" fill="#e8e8e8" stroke-width="0.00"/><path d="M52.6 396H57.8M55.2 396V399M55.2 399L53.4 402M55.2 399L56.4 401" stroke="#e8e8e8" fill="none" stroke-width="0.90" stroke-linejoin="round" stroke-linecap="round" /><path d="M57.6 399.6L59.4 401.4L62.6 397" stroke="#e8e8e8" fill="none" stroke-width="1.10" stroke-linejoin="round" stroke-linecap="round" /></svg>
</div></body></html>
